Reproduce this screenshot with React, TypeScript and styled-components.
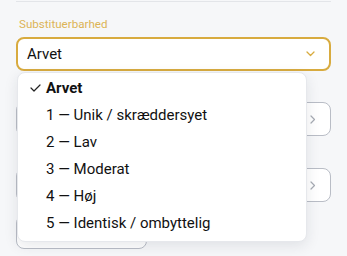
import React from 'react'
import styled, { createGlobalStyle } from 'styled-components'

const GlobalStyle = createGlobalStyle`
  html, body {
    margin: 0;
    padding: 0;
    background: #f6f7f9;
    font-family: Roboto, "Liberation Sans", sans-serif;
  }
`

const gold = '#d8ab3f'

const Page = styled.div`
  position: relative;
  width: 347px;
  height: 256px;
  overflow: hidden;
  padding: 0 16px;
  box-sizing: border-box;
`

const Divider = styled.div`
  height: 1px;
  margin-top: 1px;
  background: #e3e5e9;
`

const Field = styled.div`
  display: flex;
  flex-direction: column;
  margin-top: 15px;
`

const Label = styled.label`
  font-size: 11.6px;
  line-height: 14px;
  color: #dcb456;
  padding-left: 3px;
  margin-bottom: 6px;
`

const Select = styled.div`
  height: 34px;
  box-sizing: border-box;
  border: 2px solid ${gold};
  border-radius: 8px;
  background: #fff;
  display: flex;
  align-items: center;
  justify-content: space-between;
  padding: 0 14px 0 9px;
  font-size: 15px;
  color: #111;
`

const Row = styled.div<{ $top: number }>`
  margin-top: ${(p) => p.$top}px;
  height: 34px;
  box-sizing: border-box;
  border: 1px solid #b9bdc6;
  border-radius: 8px;
  background: #fff;
  display: flex;
  align-items: center;
  justify-content: flex-end;
  padding-right: 14px;
  color: #a2a6ae;
`

const Button = styled.div`
  margin-top: 13px;
  width: 131px;
  height: 34px;
  box-sizing: border-box;
  border: 1px solid #b9bdc6;
  border-radius: 8px;
  background: #fff;
`

const Menu = styled.ul`
  position: absolute;
  left: 17px;
  top: 72px;
  width: 290px;
  margin: 0;
  padding: 1px 0 5px;
  list-style: none;
  background: #fff;
  border: 1px solid #e6e8ec;
  border-radius: 8px;
  box-sizing: border-box;
  box-shadow: 0 4px 14px rgba(30, 40, 60, 0.1);
`

const Item = styled.li<{ $selected?: boolean }>`
  height: 27px;
  display: flex;
  align-items: center;
  padding-left: 28px;
  font-size: 15px;
  color: #111;
  font-weight: ${(p) => (p.$selected ? 700 : 400)};
`

const Check = styled.span`
  width: 16px;
  margin-left: -16px;
  display: flex;
  align-items: center;
`

const ChevronDown = () => (
  <svg width="9" height="6" viewBox="0 0 9 6" fill="none">
    <path d="M1 1l3.5 3.5L8 1" stroke={gold} strokeWidth="1.3" strokeLinecap="round" strokeLinejoin="round" />
  </svg>
)

const ChevronRight = () => (
  <svg width="6" height="9" viewBox="0 0 6 9" fill="none">
    <path d="M1 1l3.5 3.5L1 8" stroke="#a7abb3" strokeWidth="1.2" strokeLinecap="round" strokeLinejoin="round" />
  </svg>
)

const CheckIcon = () => (
  <svg width="11" height="8" viewBox="0 0 11 8" fill="none">
    <path d="M1 4l3 3L10 1" stroke="#222" strokeWidth="1.2" strokeLinecap="round" strokeLinejoin="round" />
  </svg>
)

const options = [
  '1 — Unik / skræddersyet',
  '2 — Lav',
  '3 — Moderat',
  '4 — Høj',
  '5 — Identisk / ombyttelig',
]

export default function App() {
  return (
    <>
      <GlobalStyle />
      <Page>
        <Divider />
        <Field>
          <Label>Substituerbarhed</Label>
          <Select>
            <span>Arvet</span>
            <ChevronDown />
          </Select>
        </Field>
        <Row $top={31}>
          <ChevronRight />
        </Row>
        <Row $top={32}>
          <ChevronRight />
        </Row>
        <Button />
        <Menu>
          <Item $selected>
            <Check>
              <CheckIcon />
            </Check>
            Arvet
          </Item>
          {options.map((o) => (
            <Item key={o}>{o}</Item>
          ))}
        </Menu>
      </Page>
    </>
  )
}
